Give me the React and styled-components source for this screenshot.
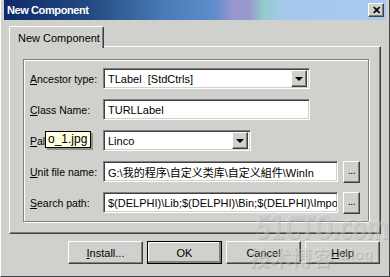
import React from 'react';
import styled, { createGlobalStyle, css } from 'styled-components';

const Global = createGlobalStyle`
  html, body {
    margin: 0;
    padding: 0;
    background: #d0d0cc;
  }
  * {
    box-sizing: border-box;
  }
`;

const face = '#d0d0cc';

const raised = css`
  background: ${face};
  border-top: 1px solid #fff;
  border-left: 1px solid #fff;
  border-right: 1px solid #404040;
  border-bottom: 1px solid #404040;
  box-shadow: inset -1px -1px 0 #808080;
`;

const sunken = css`
  background: #fff;
  border-top: 1px solid #808080;
  border-left: 1px solid #808080;
  border-right: 1px solid #fff;
  border-bottom: 1px solid #fff;
  box-shadow: inset 1px 1px 0 #404040, inset -1px -1px 0 ${face};
`;

const Window = styled.div`
  position: relative;
  width: 390px;
  height: 277px;
  overflow: hidden;
  display: flex;
  flex-direction: column;
  background: ${face};
  padding: 0 3px 3px 3px;
  border-left: 1px solid #fff;
  border-bottom: 1px solid #404040;
  border-right: 1px solid #404040;
  font-family: 'Liberation Sans', Arial, sans-serif;
  font-size: 10.5px;
  color: #000;
`;

const TitleBar = styled.div`
  height: 20px;
  flex: none;
  display: flex;
  align-items: center;
  justify-content: space-between;
  padding: 0 2px 0 3px;
  background: linear-gradient(
    90deg,
    #0e2a6c 0%,
    #22497f 22%,
    #4a7ab8 42%,
    #5d8ecc 55%,
    #9a96cf 60%,
    #9a96cf 64%,
    #94cccc 68%,
    #a6c8ee 74%,
    #a8caf0 100%
  );
`;

const Title = styled.span`
  color: #fff;
  font-weight: bold;
  font-size: 11px;
  letter-spacing: -0.4px;
`;

const CloseButton = styled.div`
  ${raised};
  width: 16px;
  height: 14px;
  display: flex;
  align-items: center;
  justify-content: center;
  font-size: 11px;
  font-weight: bold;
  line-height: 1;
`;

const Body = styled.div`
  flex: 1;
  display: flex;
  flex-direction: column;
  padding: 6px 5px 0 5px;
`;

const TabStrip = styled.div`
  display: flex;
  height: 21px;
  position: relative;
  z-index: 1;
  margin-bottom: -1px;
`;

const Tab = styled.div`
  width: 95px;
  height: 22px;
  display: flex;
  align-items: center;
  padding-left: 8px;
  font-size: 11px;
  background: ${face};
  border-top: 1px solid #fff;
  border-left: 1px solid #fff;
  border-right: 1px solid #404040;
  box-shadow: inset -1px 0 0 #808080;
  border-radius: 2px 2px 0 0;
`;

const TabPage = styled.div`
  height: 188px;
  padding: 12px 11px 11px 13px;
  border-top: 1px solid #fff;
  border-left: 1px solid #fff;
  border-right: 1px solid #404040;
  border-bottom: 1px solid #404040;
  box-shadow: inset -1px -1px 0 #808080;
`;

const Group = styled.div`
  height: 100%;
  border: 1px solid #808080;
  box-shadow: inset 1px 1px 0 #fff, 1px 1px 0 #fff;
  padding: 8px 0 0 6px;
  display: grid;
  grid-template-columns: 73px 1fr;
  grid-auto-rows: 21px;
  row-gap: 10px;
  align-items: center;
`;

const Label = styled.div`
  position: relative;
  white-space: nowrap;
  u {
    text-decoration: underline;
  }
`;

const FieldLine = styled.div`
  display: flex;
  align-items: center;
  gap: 5px;
  height: 21px;
`;

const Field = styled.div`
  ${sunken};
  width: ${(p) => p.$w}px;
  height: 21px;
  display: flex;
  align-items: center;
  padding: 2px 2px 2px 4px;
  overflow: hidden;
  white-space: nowrap;
  font-size: 11px;
  font-family: 'Liberation Sans', 'Noto Sans CJK SC', sans-serif;
`;

const FieldText = styled.span`
  flex: 1;
  overflow: hidden;
`;

const DropButton = styled.div`
  ${raised};
  width: 16px;
  height: 17px;
  flex: none;
  display: flex;
  align-items: center;
  justify-content: center;
  &::after {
    content: '';
    border-left: 4px solid transparent;
    border-right: 4px solid transparent;
    border-top: 4px solid #000;
    margin-top: 1px;
  }
`;

const Ellipsis = styled.div`
  ${raised};
  width: 17px;
  height: 22px;
  flex: none;
  display: flex;
  align-items: flex-end;
  justify-content: center;
  padding-bottom: 6px;
  font-size: 10px;
  letter-spacing: -0.5px;
`;

const Tooltip = styled.div`
  position: absolute;
  left: 15px;
  top: -4px;
  padding: 0 3px 0 2px;
  height: 17px;
  line-height: 15px;
  background: #ffffe1;
  border: 1px solid #000;
  box-shadow: 2px 2px 0 rgba(0, 0, 0, 0.3);
  font-size: 12px;
`;

const ButtonRow = styled.div`
  display: flex;
  justify-content: flex-end;
  gap: 4px;
  padding: 7px 1px 0 0;
`;

const Button = styled.div`
  ${raised};
  width: 75px;
  height: 23px;
  display: flex;
  align-items: center;
  justify-content: center;
  font-size: 11px;
  ${(p) =>
    p.$default &&
    css`
      outline: 1px solid #000;
      outline-offset: -1px;
      box-shadow: inset -2px -2px 0 #808080, inset 1px 1px 0 #fff;
    `}
`;

const Watermark = styled.div`
  position: absolute;
  pointer-events: none;
  white-space: nowrap;
  color: rgba(255, 255, 255, 0.3);
  text-shadow: 1px 1px 0 rgba(110, 110, 110, 0.25);
  font-weight: bold;
`;

const Site = styled(Watermark)`
  left: 254px;
  top: 207px;
  font-family: 'DejaVu Sans Condensed', 'Liberation Sans', sans-serif;
  font-size: 34px;
  letter-spacing: -1px;
  transform: scaleX(0.72);
  transform-origin: left top;
`;

const Blog = styled(Watermark)`
  left: 248px;
  top: 241px;
  font-family: 'Noto Sans CJK SC', sans-serif;
  font-size: 21px;
  color: rgba(255, 255, 255, 0.25);
  span {
    font-family: 'Liberation Sans', sans-serif;
    font-size: 15px;
    margin-left: 6px;
    vertical-align: 6px;
  }
`;

function Combo({ width, children }) {
  return (
    <Field $w={width}>
      <FieldText>{children}</FieldText>
      <DropButton />
    </Field>
  );
}

export default function App() {
  return (
    <>
      <Global />
      <Window>
        <TitleBar>
          <Title>New Component</Title>
          <CloseButton>✕</CloseButton>
        </TitleBar>
        <Body>
          <TabStrip>
            <Tab>New Component</Tab>
          </TabStrip>
          <TabPage>
            <Group>
              <Label>
                <u>A</u>ncestor type:
              </Label>
              <FieldLine>
                <Combo width={207}>TLabel&nbsp;&nbsp;[StdCtrls]</Combo>
              </FieldLine>

              <Label>
                <u>C</u>lass Name:
              </Label>
              <FieldLine>
                <Field $w={207}>TURLLabel</Field>
              </FieldLine>

              <Label>
                <u>P</u>alette page:
                <Tooltip>o_1.jpg</Tooltip>
              </Label>
              <FieldLine>
                <Combo width={148}>Linco</Combo>
              </FieldLine>

              <Label>
                <u>U</u>nit file name:
              </Label>
              <FieldLine>
                <Field $w={235}>G:\我的程序\自定义类库\自定义組件\WinIn</Field>
                <Ellipsis>...</Ellipsis>
              </FieldLine>

              <Label>
                <u>S</u>earch path:
              </Label>
              <FieldLine>
                <Field $w={235}>$(DELPHI)\Lib;$(DELPHI)\Bin;$(DELPHI)\Impor</Field>
                <Ellipsis>...</Ellipsis>
              </FieldLine>
            </Group>
          </TabPage>
          <ButtonRow>
            <Button>
              <span>
                <u>I</u>nstall...
              </span>
            </Button>
            <Button $default>OK</Button>
            <Button>Cancel</Button>
            <Button>
              <span>
                <u>H</u>elp
              </span>
            </Button>
          </ButtonRow>
        </Body>
        <Site>51CTO.com</Site>
        <Blog>
          技术博客<span>Blog</span>
        </Blog>
      </Window>
    </>
  );
}
